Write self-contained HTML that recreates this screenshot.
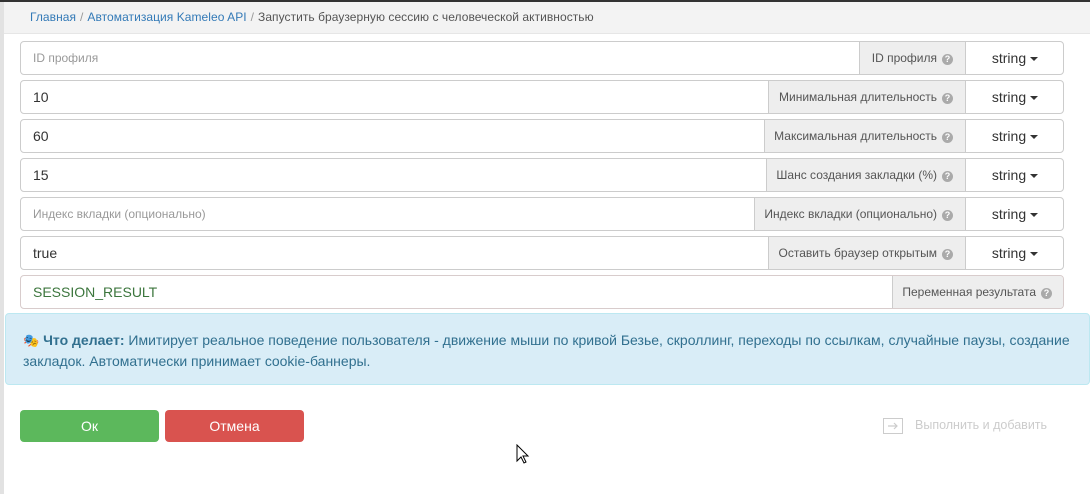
<!DOCTYPE html>
<html><head><meta charset="utf-8"><style>
*{box-sizing:border-box;margin:0;padding:0}
body{width:1090px;height:494px;background:#fff;position:relative;overflow:hidden;font-family:"Liberation Sans",Arial,sans-serif}
.strip{position:absolute;left:0;top:0;width:4px;height:494px;background:#e2e2e2}
.top{position:absolute;left:0;top:0;width:1090px;height:2px;background:#333}
.bc{position:absolute;left:4px;top:2px;width:1086px;height:32px;background:#f3f3f3;border-bottom:1px solid #e6e6e6;font-size:12px;color:#555;padding:8px 0 0 26px;white-space:nowrap;letter-spacing:0.05px}
.bc a{color:#337ab7;text-decoration:none}
.bc .s{color:#999;margin:0 4px}
.row{position:absolute;left:20px;height:34px;border:1px solid #ccc;border-radius:4px;overflow:hidden;background:#fff}
.in{position:absolute;left:12px;top:0;line-height:32px;font-size:14px;color:#333}
.ph{font-size:12px;color:#999}
.lab{position:absolute;top:0;height:32px;background:#eee;border-left:1px solid #ccc;font-size:12px;color:#555;line-height:32px;text-align:right;padding-right:12px;white-space:nowrap}
.q{display:inline-block;width:11px;height:11px;border-radius:50%;background:#aaa;color:#fff;font-size:9px;line-height:11px;text-align:center;font-weight:bold;vertical-align:0;margin-left:5px}
.str{position:absolute;top:0;left:944px;width:99px;height:32px;border-left:1px solid #ccc;font-size:14px;color:#333;line-height:32px;text-align:center}
.caret{display:inline-block;width:0;height:0;border-left:4px solid transparent;border-right:4px solid transparent;border-top:4px solid #333;vertical-align:2px;margin-left:4px}
.info{position:absolute;left:5px;top:313px;width:1085px;height:72px;background:#d9edf7;border:1px solid #bce8f1;border-radius:4px;color:#31708f;font-size:14px;line-height:20px;padding:16px 16px 0 17px}
.btn{position:absolute;top:410px;height:32px;width:139px;border-radius:4px;color:#fff;font-size:14px;line-height:32px;text-align:center}
</style></head><body>
<div class="strip"></div><div class="top"></div>
<div class="bc"><a>Главная</a><span class="s">/</span><a>Автоматизация Kameleo API</a><span class="s">/</span>Запустить браузерную сессию с человеческой активностью</div>

<div class="row" style="top:41px;width:1044px"><span class="in ph">ID профиля</span><div class="lab" style="left:838px;width:106px">ID профиля<span class="q">?</span></div><div class="str">string<span class="caret"></span></div></div>
<div class="row" style="top:80px;width:1044px"><span class="in">10</span><div class="lab" style="left:747px;width:197px">Минимальная длительность<span class="q">?</span></div><div class="str">string<span class="caret"></span></div></div>
<div class="row" style="top:119px;width:1044px"><span class="in">60</span><div class="lab" style="left:743px;width:201px">Максимальная длительность<span class="q">?</span></div><div class="str">string<span class="caret"></span></div></div>
<div class="row" style="top:158px;width:1044px"><span class="in">15</span><div class="lab" style="left:745px;width:199px">Шанс создания закладки (%)<span class="q">?</span></div><div class="str">string<span class="caret"></span></div></div>
<div class="row" style="top:197px;width:1044px"><span class="in ph">Индекс вкладки (опционально)</span><div class="lab" style="left:733px;width:211px">Индекс вкладки (опционально)<span class="q">?</span></div><div class="str">string<span class="caret"></span></div></div>
<div class="row" style="top:236px;width:1044px"><span class="in">true</span><div class="lab" style="left:747px;width:197px">Оставить браузер открытым<span class="q">?</span></div><div class="str">string<span class="caret"></span></div></div>
<div class="row" style="top:275px;width:1044px;border-color:#d8cccc"><span class="in" style="color:#3c763d">SESSION_RESULT</span><div class="lab" style="left:871px;width:172px;border-right:0">Переменная результата<span class="q">?</span></div></div>

<div class="info"><span style="font-size:13px">🎭</span> <b>Что делает:</b> Имитирует реальное поведение пользователя - движение мыши по кривой Безье, скроллинг, переходы по ссылкам, случайные паузы, создание закладок. Автоматически принимает cookie-баннеры.</div>

<div class="btn" style="left:20px;background:#5cb85c">Ок</div>
<div class="btn" style="left:165px;background:#d9534f">Отмена</div>

<svg style="position:absolute;left:883px;top:418px" width="20" height="16" viewBox="0 0 20 16"><rect x="0.5" y="0.5" width="19" height="15" fill="none" stroke="#ccc"/><path d="M5 8h9M11 5l3 3-3 3" fill="none" stroke="#ccc" stroke-width="1.2"/></svg>
<div style="position:absolute;left:915px;top:418px;font-size:12.5px;color:#ccc">Выполнить и добавить</div>

<svg style="position:absolute;left:516px;top:444px" width="14" height="22" viewBox="0 0 14 22"><path d="M1 1v16l4-4 3 6 2-1-3-6h5z" fill="#fff" stroke="#000" stroke-width="1"/></svg>
</body></html>
